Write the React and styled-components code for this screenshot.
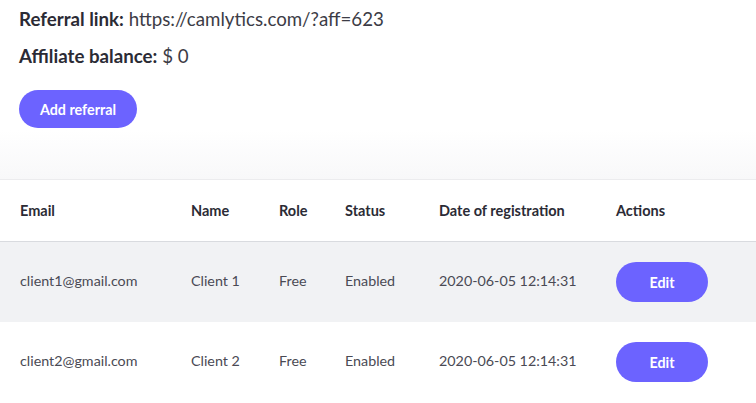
import React from "react"
import styled, { createGlobalStyle } from "styled-components"

const GlobalStyle = createGlobalStyle`
  html, body {
    margin: 0;
    padding: 0;
    background: #ffffff;
    font-family: Lato, "Noto Sans", sans-serif;
  }
`

const Page = styled.div`
  width: 756px;
  height: 403px;
  overflow: hidden;
  background: #fff;
`

const Info = styled.div`
  padding: 8px 19px 0;
  height: 130px;
  box-sizing: border-box;
  .line {
    font-size: 18.7px;
    line-height: 22px;
    color: #3c3c46;
    margin: 0 0 15px;
    b {
      font-weight: 700;
      color: #2b2b35;
    }
  }
  .line + .line {
    margin-bottom: 23px;
  }
`

const PillButton = styled.button`
  border: none;
  border-radius: 999px;
  background: #6c63ff;
  color: #fff;
  font-family: Lato, "Noto Sans", sans-serif;
  font-weight: 700;
  font-size: 14.3px;
  width: ${(p) => (p.small ? "92px" : "118px")};
  height: ${(p) => (p.small ? "40px" : "38px")};
  padding: 0;
  cursor: pointer;
`

const Shade = styled.div`
  height: 49px;
  background: linear-gradient(to bottom, #ffffff 0%, #f8f8f9 100%);
`

const Table = styled.div`
  border-top: 1px solid #ececee;
`

const Row = styled.div`
  display: grid;
  grid-template-columns: 171px 88px 66px 94px 177px 1fr;
  align-items: center;
  padding-left: 20px;
  box-sizing: border-box;
  height: ${(p) => (p.head ? "62px" : "80px")};
  padding-bottom: ${(p) => (p.head ? "0" : "3px")};
  background: ${(p) => (p.shaded ? "#f1f2f4" : "#fff")};
  border-bottom: ${(p) => (p.head ? "1px solid #d9dbdf" : "none")};
  font-size: ${(p) => (p.head ? "14.5px" : "14.3px")};
  color: ${(p) => (p.head ? "#2b2b35" : "#4a4a54")};
  font-weight: ${(p) => (p.head ? 700 : 400)};
`

const ActionCell = styled.span`
  padding-top: 3px;
`

const rows = [
  { email: "client1@gmail.com", name: "Client 1" },
  { email: "client2@gmail.com", name: "Client 2" },
]

export default function App() {
  return (
    <Page>
      <GlobalStyle />
      <Info>
        <p className="line">
          <b>Referral link:</b> https://camlytics.com/?aff=623
        </p>
        <p className="line">
          <b>Affiliate balance:</b> $ 0
        </p>
        <PillButton>Add referral</PillButton>
      </Info>
      <Shade />
      <Table>
        <Row head>
          <span>Email</span>
          <span>Name</span>
          <span>Role</span>
          <span>Status</span>
          <span>Date of registration</span>
          <span>Actions</span>
        </Row>
        {rows.map((r, i) => (
          <Row key={r.email} shaded={i % 2 === 0}>
            <span>{r.email}</span>
            <span>{r.name}</span>
            <span>Free</span>
            <span>Enabled</span>
            <span>2020-06-05 12:14:31</span>
            <ActionCell>
              <PillButton small>Edit</PillButton>
            </ActionCell>
          </Row>
        ))}
      </Table>
    </Page>
  )
}
